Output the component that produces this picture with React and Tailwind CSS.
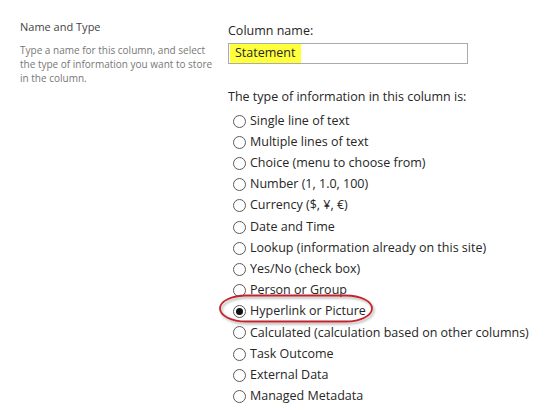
import { useState } from 'react';

const types = [
  'Single line of text',
  'Multiple lines of text',
  'Choice (menu to choose from)',
  'Number (1, 1.0, 100)',
  'Currency ($, ¥, €)',
  'Date and Time',
  'Lookup (information already on this site)',
  'Yes/No (check box)',
  'Person or Group',
  'Hyperlink or Picture',
  'Calculated (calculation based on other columns)',
  'Task Outcome',
  'External Data',
  'Managed Metadata',
];

function Radio({ checked }) {
  return (
    <span className="w-[13px] h-[13px] rounded-full border border-[#5a5a5a] bg-white flex items-center justify-center shrink-0">
      {checked && <span className="w-[7px] h-[7px] rounded-full bg-[#111]" />}
    </span>
  );
}

export default function App() {
  const [selected, setSelected] = useState('Hyperlink or Picture');

  return (
    <div className="w-[551px] h-[410px] bg-white overflow-hidden flex font-['Open_Sans',sans-serif]">
      {/* section description */}
      <div className="w-[228px] shrink-0 pl-[20px] pt-[19px]">
        <h2 className="text-[11px] leading-[16px] text-[#444]">Name and Type</h2>
        <p className="mt-[8px] w-[196px] text-[10px] leading-[14px] text-[#777]">
          Type a name for this column, and select the type of information you want to store in the column.
        </p>
      </div>

      {/* fields */}
      <div className="flex-1 pt-[22px] text-[12.5px] text-[#262626]">
        <div className="leading-[17px]">Column name:</div>
        <div className="mt-[4px] w-[240px] h-[21px] border border-[#ababab] flex items-center">
          <span className="h-[19px] bg-[#ffff3c] pl-[5px] pr-[6px] flex items-center leading-none ml-[1px] mb-[1px]">Statement</span>
        </div>

        <div className="mt-[24px] leading-[17px]">The type of information in this column is:</div>
        <div className="relative mt-[5.5px] pl-[5px]">
          {types.map((t) => (
            <label
              key={t}
              onClick={() => setSelected(t)}
              className="h-[21.2px] flex items-center gap-[4px] whitespace-nowrap cursor-pointer"
            >
              <Radio checked={selected === t} />
              <span>{t}</span>
            </label>
          ))}

          {/* red annotation ring */}
          <svg
            className="absolute left-[-10px] top-[182px] pointer-events-none"
            width="164"
            height="36"
            viewBox="0 0 164 36"
          >
            <defs>
              <filter id="ring-shadow" x="-10%" y="-30%" width="120%" height="160%">
                <feDropShadow dx="1.5" dy="2" stdDeviation="1.2" floodColor="#000" floodOpacity="0.3" />
              </filter>
            </defs>
            <rect
              x="2"
              y="2.5"
              width="152"
              height="26"
              rx="26"
              ry="13"
              fill="none"
              stroke="#c1272d"
              strokeWidth="1.8"
              filter="url(#ring-shadow)"
            />
          </svg>
        </div>
      </div>
    </div>
  );
}
